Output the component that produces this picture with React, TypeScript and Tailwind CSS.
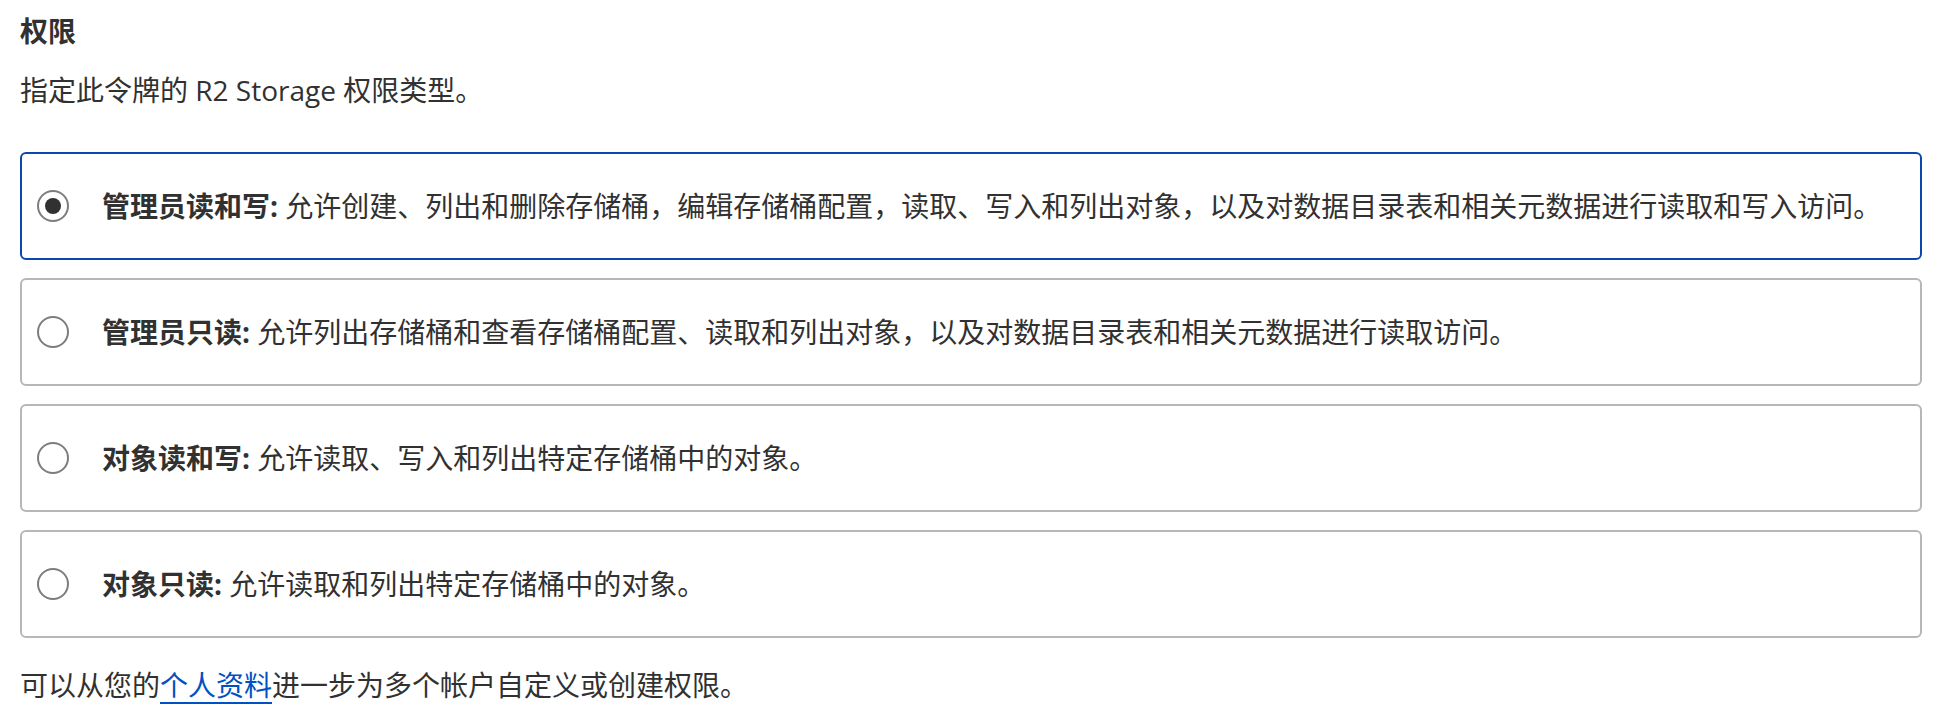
import { useState } from "react";

// ---------------------------------------------------------------------------
// Data
// ---------------------------------------------------------------------------

const OPTIONS = [
  {
    id: "admin-rw",
    label: "管理员读和写:",
    desc: "允许创建、列出和删除存储桶，编辑存储桶配置，读取、写入和列出对象，以及对数据目录表和相关元数据进行读取和写入访问。",
  },
  {
    id: "admin-ro",
    label: "管理员只读:",
    desc: "允许列出存储桶和查看存储桶配置、读取和列出对象，以及对数据目录表和相关元数据进行读取访问。",
  },
  {
    id: "object-rw",
    label: "对象读和写:",
    desc: "允许读取、写入和列出特定存储桶中的对象。",
  },
  {
    id: "object-ro",
    label: "对象只读:",
    desc: "允许读取和列出特定存储桶中的对象。",
  },
];

function Radio({ checked }: { checked: boolean }) {
  return (
    <span className="flex h-[32px] w-[32px] shrink-0 items-center justify-center rounded-full border-2 border-[#7d7d7d] bg-white">
      {checked && <span className="h-[16px] w-[16px] rounded-full bg-[#313131]" />}
    </span>
  );
}

export default function App() {
  const [selected, setSelected] = useState("admin-rw");

  return (
    <div
      className="min-h-[720px] bg-white pl-5 pr-[15px] pt-[13px] text-[28px] text-[#313131]"
      style={{ fontFamily: '"Open Sans", "Noto Sans CJK SC", sans-serif' }}
    >
      <h2 className="font-bold leading-[36px]">权限</h2>
      <p className="mt-[21px] leading-[40px]">指定此令牌的 R2 Storage 权限类型。</p>

      <div className="mt-[42px] flex flex-col gap-[18px]">
        {OPTIONS.map((o) => {
          const checked = selected === o.id;
          return (
            <label
              key={o.id}
              onClick={() => setSelected(o.id)}
              className={
                checked
                  ? "flex h-[108px] cursor-pointer items-center rounded-[6px] border-2 border-[#0b47ad] pl-[15px] pr-4"
                  : "flex h-[108px] cursor-pointer items-center rounded-[6px] border-2 border-[#b7b7b7] pl-[15px] pr-4"
              }
            >
              <Radio checked={checked} />
              <span className="ml-[33px] leading-[40px]">
                <span className="font-bold">{o.label}</span> {o.desc}
              </span>
            </label>
          );
        })}
      </div>

      <p className="mt-[27px] leading-[40px]">
        可以从您的
        <a href="#" className="text-[#0051c3] underline decoration-2 underline-offset-[6px]">
          个人资料
        </a>
        进一步为多个帐户自定义或创建权限。
      </p>
    </div>
  );
}
